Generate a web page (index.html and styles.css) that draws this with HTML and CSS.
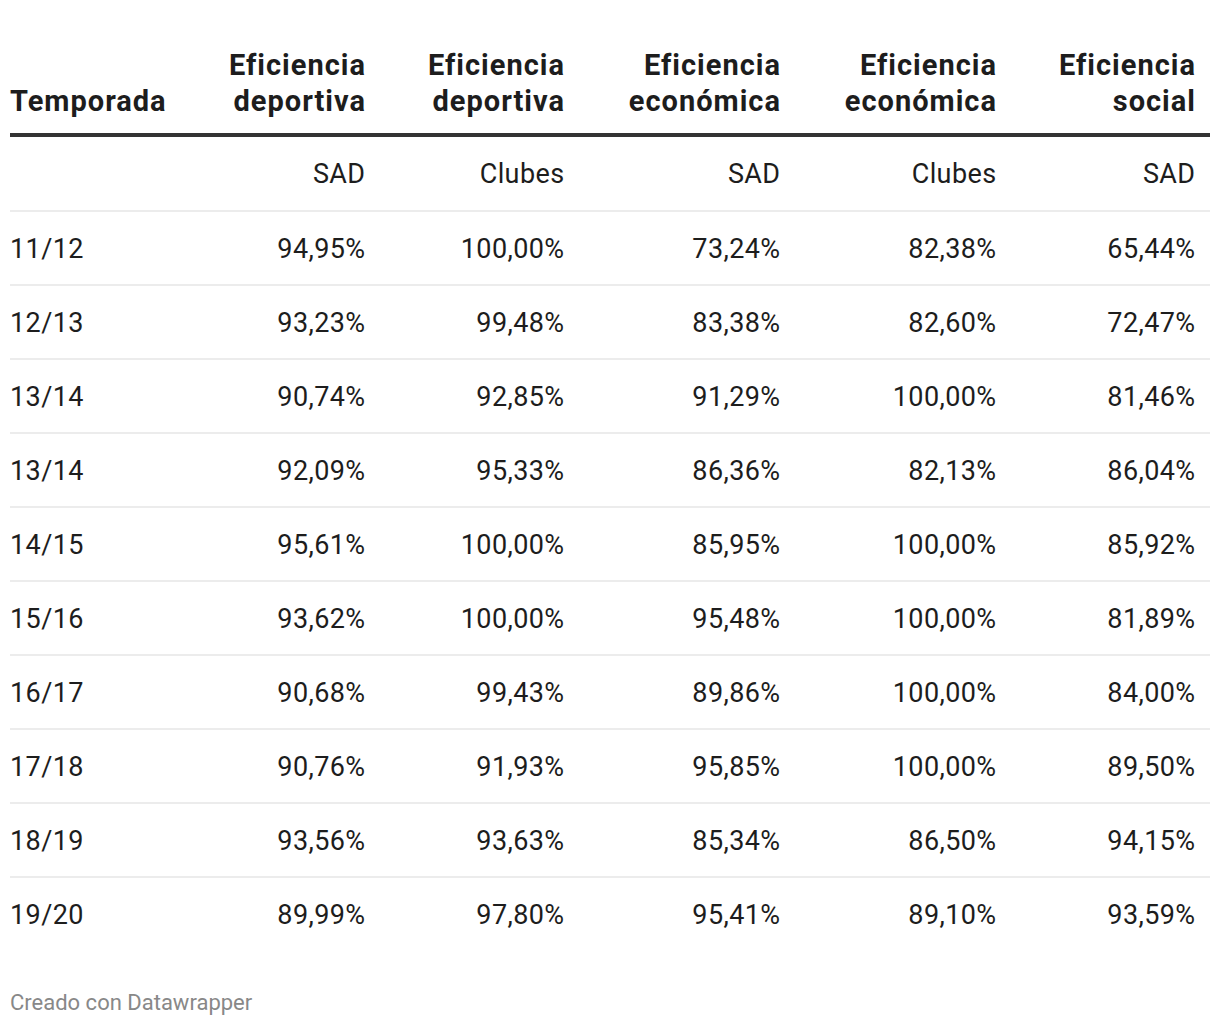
FILE: index.html
```html
<!DOCTYPE html>
<html lang="es">
<head>
<meta charset="utf-8">
<title>Eficiencia SAD vs Clubes</title>
<link rel="stylesheet" href="styles.css">
</head>
<body>
<div class="chart">
  <table class="data-table">
    <colgroup>
      <col class="c-season">
      <col class="c-narrow">
      <col class="c-narrow">
      <col class="c-wide">
      <col class="c-wide">
      <col class="c-narrow">
    </colgroup>
    <thead>
      <tr>
        <th class="left">Temporada</th>
        <th>Eficiencia<br>deportiva</th>
        <th>Eficiencia<br>deportiva</th>
        <th>Eficiencia<br>económica</th>
        <th>Eficiencia<br>económica</th>
        <th>Eficiencia<br>social</th>
      </tr>
    </thead>
    <tbody>
      <tr class="sub"><td class="left"></td><td>SAD</td><td>Clubes</td><td>SAD</td><td>Clubes</td><td>SAD</td></tr>
      <tr><td class="left">11/12</td><td>94,95%</td><td>100,00%</td><td>73,24%</td><td>82,38%</td><td>65,44%</td></tr>
      <tr><td class="left">12/13</td><td>93,23%</td><td>99,48%</td><td>83,38%</td><td>82,60%</td><td>72,47%</td></tr>
      <tr><td class="left">13/14</td><td>90,74%</td><td>92,85%</td><td>91,29%</td><td>100,00%</td><td>81,46%</td></tr>
      <tr><td class="left">13/14</td><td>92,09%</td><td>95,33%</td><td>86,36%</td><td>82,13%</td><td>86,04%</td></tr>
      <tr><td class="left">14/15</td><td>95,61%</td><td>100,00%</td><td>85,95%</td><td>100,00%</td><td>85,92%</td></tr>
      <tr><td class="left">15/16</td><td>93,62%</td><td>100,00%</td><td>95,48%</td><td>100,00%</td><td>81,89%</td></tr>
      <tr><td class="left">16/17</td><td>90,68%</td><td>99,43%</td><td>89,86%</td><td>100,00%</td><td>84,00%</td></tr>
      <tr><td class="left">17/18</td><td>90,76%</td><td>91,93%</td><td>95,85%</td><td>100,00%</td><td>89,50%</td></tr>
      <tr><td class="left">18/19</td><td>93,56%</td><td>93,63%</td><td>85,34%</td><td>86,50%</td><td>94,15%</td></tr>
      <tr><td class="left">19/20</td><td>89,99%</td><td>97,80%</td><td>95,41%</td><td>89,10%</td><td>93,59%</td></tr>
    </tbody>
  </table>
  <div class="footer">Creado con Datawrapper</div>
</div>
</body>
</html>
```

FILE: styles.css
```css
html, body {
  margin: 0;
  padding: 0;
  background: #ffffff;
}

body {
  font-family: Roboto, "Liberation Sans", Arial, sans-serif;
  color: #1d1d1d;
}

.chart {
  padding: 47px 10px 0 10px;
}

.data-table {
  width: 1200px;
  border-collapse: collapse;
  table-layout: fixed;
}

.c-season { width: 171px; }
.c-narrow { width: 199px; }
.c-wide { width: 216px; }

.data-table th {
  font-size: 29px;
  font-weight: 700;
  line-height: 36px;
  letter-spacing: 1px;
  text-align: right;
  vertical-align: bottom;
  padding: 0 14px 14px 0;
  border-bottom: 4px solid #333333;
  color: #1d1d1d;
}

.data-table td {
  font-size: 27px;
  font-weight: 400;
  line-height: 30px;
  letter-spacing: 0.4px;
  text-align: right;
  padding: 22px 14.5px 20px 0;
  border-bottom: 2px solid #ececec;
  color: #1d1d1d;
}

.data-table tbody tr:last-child td {
  border-bottom: none;
}

.data-table .left {
  text-align: left;
  padding-left: 0;
}

.data-table tr.sub td {
  padding-top: 22px;
  padding-bottom: 21px;
}

.footer {
  margin-top: 40px;
  font-size: 22px;
  line-height: 26px;
  color: #888888;
}
```
